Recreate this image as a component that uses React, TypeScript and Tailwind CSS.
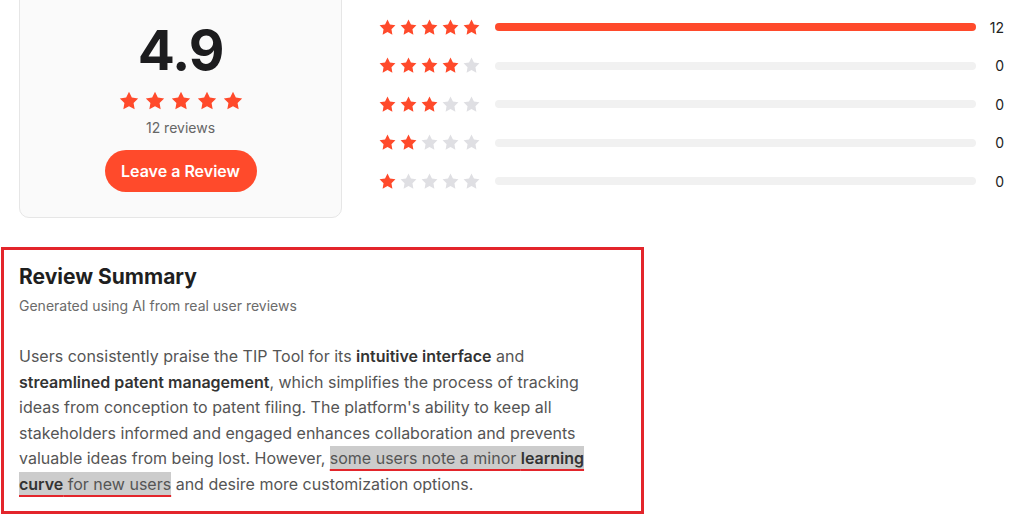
import React from 'react';

const ORANGE = '#ff4a2b';

const Star = ({ filled, size }: { filled: boolean; size: number }) => (
  <svg width={size} height={size} viewBox="0 0 24 24" aria-hidden="true">
    <path
      d="M12 2l3.09 6.26L22 9.27l-5 4.87 1.18 6.88L12 17.77l-6.18 3.25L7 14.14 2 9.27l6.91-1.01L12 2z"
      fill={filled ? ORANGE : '#dfdfe3'}
    />
  </svg>
);

const breakdown = [
  { stars: 5, count: 12 },
  { stars: 4, count: 0 },
  { stars: 3, count: 0 },
  { stars: 2, count: 0 },
  { stars: 1, count: 0 },
];

const total = 12;

export default function App() {
  return (
    <div
      className="w-[1024px] h-[516px] overflow-hidden bg-white text-[#1f1f1f]"
      style={{ fontFamily: 'Inter, "Noto Sans", sans-serif' }}
    >
      {/* Rating overview */}
      <div className="flex items-start pt-[17px] pl-[19px] pr-[20px]">
        <div className="-mt-[37px] w-[323px] shrink-0 rounded-[10px] border border-[#e6e6e6] bg-[#fafafa] pt-[42px] pb-[25px] flex flex-col items-center">
          <div className="text-[55px] font-bold leading-none tracking-[-1px] text-[#1c1c1e]">4.9</div>
          <div className="mt-[12px] flex gap-[4px]">
            {[0, 1, 2, 3, 4].map((i) => (
              <Star key={i} filled size={22} />
            ))}
          </div>
          <div className="mt-[6px] text-[14px] leading-[20px] text-[#666]">12 reviews</div>
          <button
            className="mt-[12px] h-[42px] w-[152px] rounded-full bg-[#ff4a2b] text-[16px] font-semibold text-white"
          >
            Leave a Review
          </button>
        </div>

        <div className="ml-[36px] flex flex-1 flex-col gap-[18.5px]">
          {breakdown.map((row) => (
            <div key={row.stars} className="flex h-[20px] items-center">
              <div className="flex gap-[2px]">
                {[1, 2, 3, 4, 5].map((i) => (
                  <Star key={i} filled={i <= row.stars} size={19} />
                ))}
              </div>
              <div className="ml-[14px] h-[8px] flex-1 rounded-full bg-[#f1f1f1]">
                <div
                  className="h-full rounded-full bg-[#ff4a2b]"
                  style={{ width: `${(row.count / total) * 100}%` }}
                />
              </div>
              <div className="ml-[12px] w-[16px] text-right text-[14px] text-[#222]">{row.count}</div>
            </div>
          ))}
        </div>
      </div>

      {/* Review summary */}
      <div className="mt-[29px] ml-[1px] w-[643px] border-[3px] border-[#e3252b] pl-[15px] pr-[28px] pt-[13px] pb-[14px]">
        <h2 className="text-[21px] font-bold leading-[28px] text-[#1f1f1f]">Review Summary</h2>
        <p className="mt-[5px] text-[14px] leading-[20px] text-[#6b6b6b]">Generated using AI from real user reviews</p>
        <p className="mt-[28px] text-[16px] leading-[25.5px] text-[#555]">
          Users consistently praise the TIP Tool for its{' '}
          <strong className="font-semibold text-[#333]">intuitive interface</strong> and{' '}
          <strong className="font-semibold text-[#333]">streamlined patent management</strong>, which simplifies the
          process of tracking ideas from conception to patent filing. The platform's ability to keep all stakeholders
          informed and engaged enhances collaboration and prevents valuable ideas from being lost. However,{' '}
          <span className="bg-[#cccccc] py-[2px] underline decoration-[#e3252b] decoration-2 underline-offset-[5px]">
            some users note a minor <strong className="font-semibold text-[#333]">learning curve</strong> for new users
          </span>{' '}
          and desire more customization options.
        </p>
      </div>
    </div>
  );
}
